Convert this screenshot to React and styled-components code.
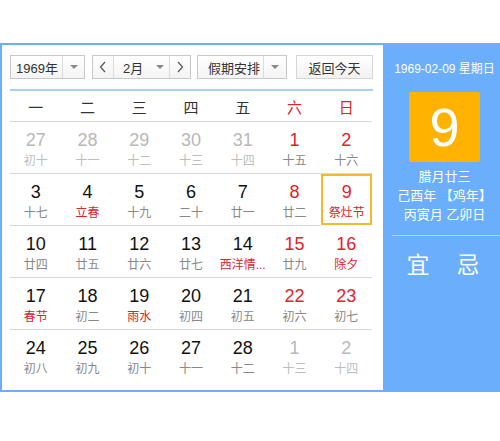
import React from "react";
import styled, { createGlobalStyle } from "styled-components";

const GlobalStyle = createGlobalStyle`
  html, body {
    margin: 0;
    padding: 0;
    background: #fff;
    overflow: hidden;
    font-family: "Liberation Sans", "Noto Sans CJK SC", sans-serif;
  }
`;

const Page = styled.div`
  padding-top: 43px;
  width: 520px;
`;

const Widget = styled.div`
  display: flex;
  width: 506px;
  height: 349px;
  border: 2px solid #6aaefc;
  border-right: none;
  box-sizing: border-box;
`;

const Main = styled.div`
  width: 381px;
  background: #fff;
  padding: 10px 9px 0 8px;
  box-sizing: border-box;
`;

const Toolbar = styled.div`
  display: flex;
  align-items: center;
  height: 24px;
`;

const Select = styled.div`
  display: flex;
  height: 24px;
  box-sizing: border-box;
  border: 1px solid #c8c8c8;
  background: linear-gradient(#ffffff, #f4f4f4);
  margin-left: ${(p) => p.$ml || 0}px;
  width: ${(p) => p.$w}px;
  font-size: 13px;
  color: #333;
`;

const SelectText = styled.div`
  flex: 1;
  display: flex;
  align-items: center;
  padding-left: ${(p) => p.$pl || 6}px;
`;

const Arrow = styled.div`
  width: ${(p) => p.$w || 21}px;
  border-left: ${(p) => (p.$sep ? "1px solid #dcdcdc" : "none")};
  display: flex;
  align-items: center;
  justify-content: center;
  &::after {
    content: "";
    border-left: 4px solid transparent;
    border-right: 4px solid transparent;
    border-top: 4px solid #888;
  }
`;

const NavBtn = styled.div`
  width: 20px;
  display: flex;
  align-items: center;
  justify-content: center;
  border-left: ${(p) => (p.$left ? "1px solid #dcdcdc" : "none")};
  border-right: ${(p) => (p.$right ? "1px solid #dcdcdc" : "none")};
`;

const TodayBtn = styled.div`
  margin-left: 9px;
  width: 77px;
  height: 24px;
  box-sizing: border-box;
  border: 1px solid #d6d6d6;
  background: linear-gradient(#ffffff, #f2f2f2);
  display: flex;
  align-items: center;
  justify-content: center;
  font-size: 13px;
  color: #333;
`;

const Divider = styled.div`
  margin-top: 10px;
  height: 2px;
  width: 363px;
  background: #a9cdf5;
`;

const Grid = styled.div`
  display: grid;
  grid-template-columns: repeat(7, 1fr);
  width: 362px;
`;

const Head = styled.div`
  height: 30px;
  display: flex;
  align-items: center;
  justify-content: center;
  font-size: 15px;
  color: ${(p) => (p.$red ? "#e0222c" : "#333")};
  border-bottom: 1px solid #d8d8d8;
`;

const Cell = styled.div`
  height: 52px;
  box-sizing: border-box;
  border-bottom: ${(p) => (p.$last ? "none" : "1px solid #d8d8d8")};
  display: flex;
  flex-direction: column;
  align-items: center;
  padding-top: ${(p) => (p.$sel ? 5 : 7)}px;
  ${(p) =>
    p.$sel &&
    `
    border: 2px solid #f6b92c;
    margin: 0 0 1px 1px;
    height: 51px;
  `}
`;

const Num = styled.div`
  font-size: 18px;
  line-height: 22px;
  color: ${(p) => (p.$other ? "#b8b8b8" : p.$red ? "#e0222c" : "#111")};
`;

const Lunar = styled.div`
  font-size: 12px;
  line-height: 16px;
  margin-top: 2px;
  color: ${(p) => (p.$other ? "#bdbdbd" : p.$red ? "#d9242c" : "#888")};
`;

const Side = styled.div`
  width: 123px;
  background: #6aaefc;
  color: #fff;
  display: flex;
  flex-direction: column;
  align-items: center;
`;

const SideDate = styled.div`
  margin-top: 16px;
  font-size: 12px;
  line-height: 16px;
`;

const BigDay = styled.div`
  margin-top: 15px;
  width: 71px;
  height: 70px;
  background: #ffb300;
  border-radius: 2px;
  display: flex;
  align-items: center;
  justify-content: center;
  font-size: 54px;
  font-family: "Liberation Sans", sans-serif;
`;

const SideLine = styled.div`
  font-size: 13px;
  line-height: 19px;
  margin-top: ${(p) => p.$mt || 0}px;
`;

const SideRule = styled.div`
  margin-top: 11px;
  margin-left: 9px;
  align-self: stretch;
  height: 1px;
  background: rgba(255, 255, 255, 0.45);
`;

const YiJi = styled.div`
  display: flex;
  gap: 27px;
  margin-top: 10px;
  margin-right: 3px;
  font-size: 23px;
`;

const Chevron = ({ dir }) => (
  <svg width="8" height="12" viewBox="0 0 8 12">
    <polyline
      points={dir === "l" ? "6,1 1.5,6 6,11" : "2,1 6.5,6 2,11"}
      fill="none"
      stroke="#555"
      strokeWidth="1.2"
    />
  </svg>
);

const weekdays = ["一", "二", "三", "四", "五", "六", "日"];

// [day, lunar, flags]  o: other month, r: red number, l: red lunar, s: selected
const days = [
  [27, "初十", "o"], [28, "十一", "o"], [29, "十二", "o"], [30, "十三", "o"], [31, "十四", "o"], [1, "十五", "r"], [2, "十六", "r"],
  [3, "十七", ""], [4, "立春", "l"], [5, "十九", ""], [6, "二十", ""], [7, "廿一", ""], [8, "廿二", "r"], [9, "祭灶节", "rls"],
  [10, "廿四", ""], [11, "廿五", ""], [12, "廿六", ""], [13, "廿七", ""], [14, "西洋情...", "l"], [15, "廿九", "r"], [16, "除夕", "rl"],
  [17, "春节", "l"], [18, "初二", ""], [19, "雨水", "l"], [20, "初四", ""], [21, "初五", ""], [22, "初六", "r"], [23, "初七", "r"],
  [24, "初八", ""], [25, "初九", ""], [26, "初十", ""], [27, "十一", ""], [28, "十二", ""], [1, "十三", "o"], [2, "十四", "o"],
];

export default function App() {
  return (
    <Page>
      <GlobalStyle />
      <Widget>
        <Main>
          <Toolbar>
            <Select $w={75}>
              <SelectText $pl={5}>1969年</SelectText>
              <Arrow $sep />
            </Select>
            <Select $w={99} $ml={7}>
              <NavBtn $right>
                <Chevron dir="l" />
              </NavBtn>
              <SelectText $pl={9}>2月</SelectText>
              <Arrow $w={18} />
              <NavBtn $left>
                <Chevron dir="r" />
              </NavBtn>
            </Select>
            <Select $w={90} $ml={6}>
              <SelectText $pl={10}>假期安排</SelectText>
              <Arrow $sep $w={22} />
            </Select>
            <TodayBtn>返回今天</TodayBtn>
          </Toolbar>
          <Divider />
          <Grid>
            {weekdays.map((w, i) => (
              <Head key={w} $red={i >= 5}>
                {w}
              </Head>
            ))}
            {days.map(([d, l, f], i) => (
              <Cell key={i} $sel={f.includes("s")} $last={i >= 28}>
                <Num $other={f.includes("o")} $red={f.includes("r")}>
                  {d}
                </Num>
                <Lunar $other={f.includes("o")} $red={f.includes("l")}>
                  {l}
                </Lunar>
              </Cell>
            ))}
          </Grid>
        </Main>
        <Side>
          <SideDate>1969-02-09 星期日</SideDate>
          <BigDay>9</BigDay>
          <SideLine $mt={5}>腊月廿三</SideLine>
          <SideLine>己酉年 【鸡年】</SideLine>
          <SideLine>丙寅月 乙卯日</SideLine>
          <SideRule />
          <YiJi>
            <span>宜</span>
            <span>忌</span>
          </YiJi>
        </Side>
      </Widget>
    </Page>
  );
}
